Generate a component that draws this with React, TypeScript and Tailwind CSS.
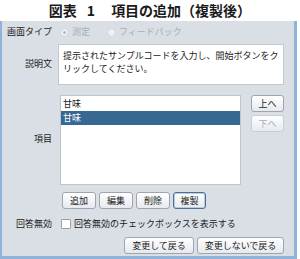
import React from "react";

const jp = { fontFamily: '"Noto Sans CJK JP", "Noto Sans", sans-serif' };

function Btn({ children, w, focused, disabled }: { children: React.ReactNode; w: string; focused?: boolean; disabled?: boolean }) {
  return (
    <button
      className={
        "h-[17px] rounded-[3px] border text-[9px] leading-none flex items-center justify-center bg-gradient-to-b from-white to-[#e6e9ee] " +
        w +
        (focused ? " border-[#4d6f93] shadow-[inset_0_0_0_1px_#b9cde2]" : disabled ? " border-[#c9ced6] text-[#a8aeb6]" : " border-[#9ea5ae] text-[#222]")
      }
    >
      {children}
    </button>
  );
}

export default function App() {
  return (
    <div className="w-[300px] h-[259px] bg-white flex flex-col text-[#1a1a1a]" style={jp}>
      <div className="h-[21px] flex items-center justify-center text-[14px] font-bold">
        <span>図表</span>
        <span className="ml-[10px]">1</span>
        <span className="ml-[16px]">項目の追加（複製後）</span>
      </div>
      <div className="flex-1 bg-[#dadfe6] border-l-2 border-r-[3px] border-b-[3px] border-[#8fb3d9] mr-[3px] flex flex-col pl-[4px] pr-[10px] pt-[4px] text-[9px]">
        {/* 画面タイプ */}
        <div className="flex items-center h-[14px] whitespace-nowrap">
          <div className="w-[46px] text-right">画面タイプ</div>
          <div className="ml-[8px] flex items-center text-[#a9aeb5]">
            <span className="w-[9px] h-[9px] rounded-full border border-[#d0d4da] bg-[#eef0f3] flex items-center justify-center">
              <span className="w-[3px] h-[3px] rounded-full bg-[#b5bac1]" />
            </span>
            <span className="ml-[3px]">測定</span>
            <span className="ml-[17px] w-[9px] h-[9px] rounded-full border border-[#d0d4da] bg-[#eef0f3]" />
            <span className="ml-[3px]">フィードバック</span>
          </div>
        </div>
        {/* 説明文 */}
        <div className="flex mt-[5px]">
          <div className="w-[46px] text-right pt-[13px]">説明文</div>
          <div className="ml-[6px] w-[226px] h-[41px] bg-white border border-[#c3c8cf] text-[9px] leading-[13px] px-[4px] pt-[4px]">
            提示されたサンプルコードを入力し、開始ボタンをクリックしてください。
          </div>
        </div>
        {/* 項目 */}
        <div className="flex mt-[10px]">
          <div className="w-[46px] text-right pt-[37px]">項目</div>
          <div className="ml-[8px] w-[181px] h-[90px] bg-white border border-[#bfc4cb]">
            <div className="h-[15px] flex items-center px-[2px]">甘味</div>
            <div className="h-[14px] flex items-center px-[2px] bg-[#376891] text-white">甘味</div>
          </div>
          <div className="ml-[10px] flex flex-col gap-[3px]">
            <Btn w="w-[33px]">上へ</Btn>
            <Btn w="w-[33px]" disabled>下へ</Btn>
          </div>
        </div>
        {/* buttons */}
        <div className="flex gap-[3px] ml-[56px] mt-[7px]">
          <Btn w="w-[34px]">追加</Btn>
          <Btn w="w-[34px]">編集</Btn>
          <Btn w="w-[34px]">削除</Btn>
          <Btn w="w-[33px]" focused>複製</Btn>
        </div>
        {/* 回答無効 */}
        <div className="flex items-center mt-[8px] h-[14px] whitespace-nowrap">
          <div className="w-[46px] text-right">回答無効</div>
          <span className="ml-[9px] w-[10px] h-[10px] border border-[#9aa1aa] bg-white rounded-[1px]" />
          <span className="ml-[3px]">回答無効のチェックボックスを表示する</span>
        </div>
        {/* bottom */}
        <div className="flex justify-end gap-[3px] mt-[6px]">
          <Btn w="w-[70px]">変更して戻る</Btn>
          <Btn w="w-[87px]">変更しないで戻る</Btn>
        </div>
      </div>
    </div>
  );
}
